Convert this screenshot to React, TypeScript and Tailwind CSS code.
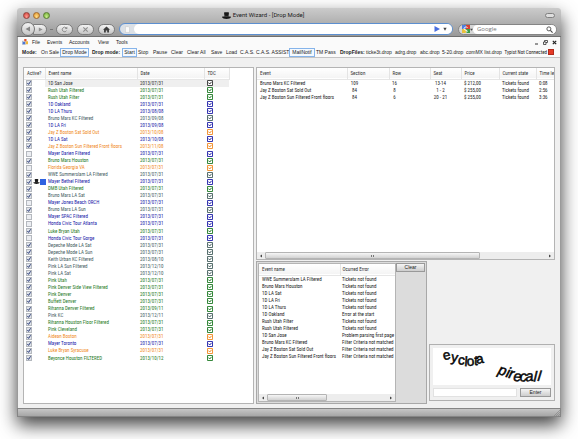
import React from "react";

type Tone = "black" | "green" | "blue" | "slate" | "orange";

const toneClass: Record<Tone, string> = {
  black: "text-[#333333]",
  green: "text-[#1f7a26]",
  blue: "text-[#2020a8]",
  slate: "text-[#45605f]",
  orange: "text-[#f08a24]",
};

type EventRow = { name: string; date: string; tone: Tone; off?: boolean; marked?: boolean };

const events: EventRow[] = [
  { name: "1D San Jose", date: "2013/07/31", tone: "black" },
  { name: "Rush Utah Filtered", date: "2013/07/31", tone: "green" },
  { name: "Rush Utah Filter", date: "2013/07/31", tone: "green" },
  { name: "1D Oakland", date: "2013/07/31", tone: "blue" },
  { name: "1D LA Thurs", date: "2013/08/08", tone: "blue" },
  { name: "Bruno Mars KC Filtered", date: "2013/09/08", tone: "slate" },
  { name: "1D LA Fri", date: "2013/09/08", tone: "blue" },
  { name: "Jay Z Boston Sat Sold Out", date: "2013/10/08", tone: "orange" },
  { name: "1D LA Sat", date: "2013/10/08", tone: "blue" },
  { name: "Jay Z Boston Sun Filtered Front floors", date: "2013/11/08", tone: "orange" },
  { name: "Mayer Darien Filtered", date: "2013/07/31", tone: "blue", off: true },
  { name: "Bruno Mars Houston", date: "2013/07/31", tone: "green" },
  { name: "Florida Georgia VA", date: "2013/07/31", tone: "orange", off: true },
  { name: "WWE Summerslam LA Filtered", date: "2013/07/31", tone: "slate" },
  { name: "Mayer Bethel Filtered", date: "2013/07/31", tone: "blue", marked: true },
  { name: "DMB Utah Filtered", date: "2013/07/31", tone: "green" },
  { name: "Bruno Mars LA Sat", date: "2013/07/31", tone: "slate" },
  { name: "Mayer Jones Beach ORCH", date: "2013/07/31", tone: "blue", off: true },
  { name: "Bruno Mars LA Sun", date: "2013/07/31", tone: "slate" },
  { name: "Mayer SPAC Filtered", date: "2013/07/31", tone: "blue", off: true },
  { name: "Honda Civic Tour Atlanta", date: "2013/07/31", tone: "blue", off: true },
  { name: "Luke Bryan Utah", date: "2013/07/31", tone: "green" },
  { name: "Honda Civic Tour Gorge", date: "2013/07/31", tone: "blue", off: true },
  { name: "Depeche Mode LA Sat", date: "2013/07/31", tone: "slate" },
  { name: "Depeche Mode LA Sun", date: "2013/07/31", tone: "slate" },
  { name: "Keith Urban KC Filtered", date: "2013/08/10", tone: "slate" },
  { name: "Pink LA Sun Filtered", date: "2013/12/10", tone: "slate" },
  { name: "Pink LA Sat", date: "2013/12/10", tone: "slate" },
  { name: "Pink Utah", date: "2013/07/31", tone: "green" },
  { name: "Pink Denver Side View Filtered", date: "2013/07/31", tone: "green" },
  { name: "Pink Denver", date: "2013/07/31", tone: "green" },
  { name: "Buffett Denver", date: "2013/07/31", tone: "green" },
  { name: "Rihanna Denver Filtered", date: "2013/09/11", tone: "green" },
  { name: "Pink KC", date: "2013/12/11", tone: "slate" },
  { name: "Rihanna Houston Floor Filtered", date: "2013/07/31", tone: "green" },
  { name: "Pink Cleveland", date: "2013/07/31", tone: "green" },
  { name: "Aidean Boston", date: "2013/07/31", tone: "orange" },
  { name: "Mayer Toronto", date: "2013/07/31", tone: "blue" },
  { name: "Luke Bryan Syracuse", date: "2013/07/31", tone: "orange" },
  { name: "Beyonce Houston FILTERED", date: "2013/10/12", tone: "green" },
];

const drops = [
  ["Bruno Mars KC Filtered", "109", "16", "13-14", "$ 212,00", "Tickets found", "0:08"],
  ["Jay Z Boston Sat Sold Out", "84", "8", "1 - 2", "$ 255,00", "Tickets found", "2:56"],
  ["Jay Z Boston Sun Filtered Front floors", "84", "6", "20 - 21", "$ 255,00", "Tickets found", "3:36"],
];

const dropCell = [
  "",
  "inline-block w-[9px] text-center",
  "inline-block w-[5px] text-center",
  "inline-block w-[15px] text-center",
  "",
  "",
  "",
];

const errors = [
  ["WWE Summerslam LA Filtered", "Tickets not found"],
  ["Bruno Mars Houston", "Tickets not found"],
  ["1D LA Sat", "Tickets not found"],
  ["1D LA Fri", "Tickets not found"],
  ["1D LA Thurs", "Tickets not found"],
  ["1D Oakland", "Error at the start"],
  ["Rush Utah Filter", "Tickets not found"],
  ["Rush Utah Filtered", "Tickets not found"],
  ["1D San Jose", "Problem parsing first page"],
  ["Bruno Mars KC Filtered", "Filter Criteria not matched"],
  ["Jay Z Boston Sat Sold Out", "Filter Criteria not matched"],
  ["Jay Z Boston Sun Filtered Front floors", "Filter Criteria not matched"],
];

const tools: { label: string; width: string; kind?: "bold" | "boxed" }[] = [
  { label: "Mode:", width: "w-[18px]", kind: "bold" },
  { label: "On Sale", width: "w-[20px]" },
  { label: "Drop Mode", width: "w-[29px]", kind: "boxed" },
  { label: "Drop mode:", width: "w-[33px]", kind: "bold" },
  { label: "Start", width: "w-[15px]", kind: "boxed" },
  { label: "Stop", width: "w-[15px]" },
  { label: "Pause", width: "w-[18px]" },
  { label: "Clear", width: "w-[16px]" },
  { label: "Clear All", width: "w-[24px]" },
  { label: "Save", width: "w-[15px]" },
  { label: "Load", width: "w-[14px]" },
  { label: "C.A.S.", width: "w-[16px]" },
  { label: "C.A.S. ASSIST", width: "w-[34px]" },
  { label: "MailNotif", width: "w-[26px]", kind: "boxed" },
  { label: "TM Pass", width: "w-[22px]" },
  { label: "DropFiles:", width: "w-[28px]", kind: "bold" },
  { label: "ticke3t.drop", width: "w-[29px]" },
  { label: "adrg.drop", width: "w-[25px]" },
  { label: "abc.drop", width: "w-[22px]" },
  { label: "5-20.drop", width: "w-[24px]" },
  { label: "comMX list.drop", width: "w-[36px]" },
];

const pill =
  "flex h-[11px] items-center justify-center rounded-full border border-[#7d7d7d] bg-linear-to-b from-[#f4f4f4] to-[#c4c4c4]";

function Hat({ className }: { className: string }) {
  return (
    <svg viewBox="0 0 18 14" className={className} aria-hidden="true">
      <path d="M4 1c3-1 7-1 10 0l-1 8c3 0 5 0 5 1 0 2-5 4-9 4s-9-2-9-4c0-1 2-1 5-1z" fill="#181818" />
      <path d="M5 8c3 1 5 1 8 0" stroke="#777" fill="none" />
    </svg>
  );
}

function Check({ label, off }: { label: string; off?: boolean }) {
  return (
    <span className="relative block size-[6px]">
      <input
        type="checkbox"
        aria-label={label}
        defaultChecked={!off}
        className="peer block size-[6px] appearance-none border border-[#b4b8be] bg-[#eceef2] checked:bg-[#dfe3ea]"
      />
      <svg
        viewBox="0 0 6 6"
        className="pointer-events-none absolute inset-0 hidden size-[6px] peer-checked:block"
        aria-hidden="true"
      >
        <path d="M1.4 3l1.2 1.4L4.6 1.3" fill="none" stroke="#2b3c78" strokeWidth="1" />
      </svg>
    </span>
  );
}

function TdcMark() {
  return (
    <svg viewBox="0 0 6 6" className="block size-[6px]" aria-hidden="true">
      <path d="M.5.5h5v5h-5z" fill="#fff" stroke="currentColor" strokeWidth=".9" />
      <path d="M1.500 2.600l1.200 1.400L4.600 1.800" fill="none" stroke="currentColor" strokeWidth="1" />
    </svg>
  );
}

function ScrollBar({ thumb }: { thumb: string }) {
  return (
    <div className="flex h-[7px] items-center bg-[#ededed] px-[2px]" aria-hidden="true">
      <svg viewBox="0 0 4 4" className="size-[4px]">
        <path d="M3 .5v3L1 2z" fill="#444" />
      </svg>
      <div className="ml-[2px] flex h-full flex-1">
        <div
          className={
            "flex h-full items-center justify-center gap-px rounded-[1px] border border-[#b4b4b4] bg-linear-to-b from-[#f6f6f6] to-[#d2d2d2] " +
            thumb
          }
        >
          <i className="h-[2px] w-px bg-[#777]" />
          <i className="h-[2px] w-px bg-[#777]" />
        </div>
      </div>
      <svg viewBox="0 0 4 4" className="size-[4px]">
        <path d="M1 .5v3L3 2z" fill="#444" />
      </svg>
    </div>
  );
}

const headRow = "h-[11px] border-b border-[#e6e6e6] bg-linear-to-b from-white to-[#f4f4f4] text-left text-[#333]";
const th = "border-r border-[#e4e4e4] p-0 pl-[3px] font-normal";
const listFont = "font-['Roboto_Condensed','Lato',sans-serif] text-[5px] leading-[7px]";

function TitleBar() {
  return (
    <header className="h-[29px] rounded-t-[3px] border-b border-[#6f6f6f] bg-linear-to-b from-[#cbcbcb] to-[#999999] px-[4px]">
      <div className="flex h-[14px] items-center px-[2px]">
        <div className="flex flex-1 gap-[3px]">
          <button aria-label="Close" className="size-[7px] rounded-full border border-[#93403b] bg-radial-[at_50%_75%] from-[#ff9c92] to-[#cf3a32]" />
          <button aria-label="Minimize" className="size-[7px] rounded-full border border-[#a26a2c] bg-radial-[at_50%_75%] from-[#ffe08a] to-[#e28f26]" />
          <button aria-label="Zoom" className="size-[7px] rounded-full border border-[#5a7d33] bg-radial-[at_50%_75%] from-[#c9f08b] to-[#6ba832]" />
        </div>
        <h1 className="mr-[52px] flex items-center gap-[2px] font-['Roboto','Open_Sans',sans-serif] text-[6px] leading-[8px] text-[#1c1c1c]">
          <Hat className="h-[7px] w-[9px]" />
          Event Wizard - [Drop Mode]
        </h1>
        <div className="flex flex-1 justify-end">
          <button aria-label="Toggle toolbar" className="h-[5px] w-[10px] rounded-full border border-[#808080] bg-[#dedede]" />
        </div>
      </div>
      <div className="flex h-[14px] items-center">
        <button aria-label="Back" className="z-10 flex size-[14px] items-center justify-center rounded-full border border-[#777] bg-linear-to-b from-[#f4f4f4] to-[#c4c4c4]">
          <svg viewBox="0 0 6 6" className="size-[6px]"><path d="M5 .5v5L.5 3z" fill="#858585" /></svg>
        </button>
        <button aria-label="Forward" className={pill + " -ml-[2px] w-[14px] rounded-l-none"}>
          <svg viewBox="0 0 6 6" className="size-[5px]"><path d="M1 .5v5L5.5 3z" fill="#909090" /></svg>
        </button>
        <i className="mx-[3px] h-px w-[3px] bg-[#777]" />
        <button aria-label="Reload" className={pill + " w-[17px]"}>
          <svg viewBox="0 0 8 8" className="size-[7px]"><path d="M6.3 5.3A2.6 2.6 0 1 1 5.8 2.100" fill="none" stroke="#8c8c8c" strokeWidth="1.100" /><path d="M7.200.5v3H4.200z" fill="#8c8c8c" /></svg>
        </button>
        <button aria-label="Stop loading" className={pill + " ml-[4px] w-[17px]"}>
          <svg viewBox="0 0 8 8" className="size-[7px]"><path d="M1.500 1.500l5 5M6.500 1.500l-5 5" stroke="#8c8c8c" strokeWidth="1.200" /></svg>
        </button>
        <button aria-label="Home" className={pill + " ml-[4px] w-[17px]"}>
          <svg viewBox="0 0 8 8" className="size-[7px]"><path d="M4 .5L8 4.300H6.800V7.500H4.800V5H3.200V7.500H1.200V4.300H0z" fill="#3c3c3c" /></svg>
        </button>
        <div className="ml-[4px] flex h-[12px] flex-1 items-center rounded-full border border-[#5c8fd0] bg-[#dbe0e6]">
          <svg viewBox="0 0 6 8" className="ml-[5px] h-[7px] w-[5px]"><path d="M.5.5h3.500l1.500 1.500v5.500h-5z" fill="#fafafa" stroke="#c0c0c0" strokeWidth=".6" /></svg>
          <div className="ml-[4px] flex h-full flex-1 items-center rounded-full bg-white pr-[5px]">
            <input aria-label="Address" className="h-[8px] min-w-0 flex-1 bg-transparent pl-[4px] text-[6px] outline-none" />
            <button aria-label="Go"><svg viewBox="0 0 6 6" className="size-[6px]"><path d="M.5 0v6L6 3z" fill="#4a6fe0" /></svg></button>
            <button aria-label="History" className="ml-[3px]"><svg viewBox="0 0 6 6" className="size-[4px]"><path d="M.5 1h5L3 5.500z" fill="#444" /></svg></button>
          </div>
        </div>
        <div className="ml-[5px] flex h-[11px] w-[99px] items-center rounded-full border border-[#858585] bg-[#d6d6d6]">
          <svg viewBox="0 0 8 8" className="ml-[3px] size-[8px]">
            <path d="M0 0h4v4H0z" fill="#4d7fe0" /><path d="M4 0h4v4H4z" fill="#d8402f" /><path d="M0 4h4v4H0z" fill="#eac13c" /><path d="M4 4h4v4H4z" fill="#3d9c45" />
            <path d="M5.500 2.500A2 1.600 0 1 0 4 5.200c1.500 0 1.800 2-.2 2" fill="none" stroke="#fff" strokeWidth="1" />
          </svg>
          <svg viewBox="0 0 4 4" className="size-[3px]"><path d="M0 1h4L2 3.500z" fill="#444" /></svg>
          <div className="flex h-full min-w-0 flex-1 items-center rounded-full bg-white pr-[3px] pl-[4px]">
            <input aria-label="Search" placeholder="Google" className="h-[9px] min-w-0 flex-1 bg-transparent font-['Open_Sans',sans-serif] text-[6px] leading-[9px] outline-none placeholder:text-[#777]" />
            <svg viewBox="0 0 8 8" className="size-[7px]"><circle cx="3.300" cy="3.300" r="2.300" fill="none" stroke="#444" /><path d="M5 5l2.500 2.500" stroke="#444" strokeWidth="1.200" /></svg>
          </div>
        </div>
      </div>
    </header>
  );
}

function Menus() {
  return (
    <div className="bg-[#fafafa] text-[#222]">
      <nav className="flex h-[10px] items-center pl-[4px]">
        <svg viewBox="0 0 8 8" className="size-[6px]">
          <path d="M0 3h5v4H0z" fill="#d8dcea" stroke="#6b7a9c" strokeWidth=".5" />
          <path d="M3 0h3v3H3z" fill="#e2512f" /><path d="M5 3h3v4H5z" fill="#f0b73a" /><path d="M1 4h3v3H1z" fill="#4a78d8" />
        </svg>
        <button className="ml-[4px] w-[15px] text-left">File</button>
        <button className="w-[22px] text-left">Events</button>
        <button className="w-[29px] text-left">Accounts</button>
        <button className="w-[18px] text-left">View</button>
        <button className="text-left">Tools</button>
        <div className="ml-auto flex items-center gap-[4px] pr-[3px]">
          <button aria-label="Minimize child"><svg viewBox="0 0 5 5" className="size-[5px]"><path d="M1 4h3" stroke="#333" /></svg></button>
          <button aria-label="Restore child"><svg viewBox="0 0 5 5" className="size-[5px]"><path d="M1.500 2V.5h3v2H3M.5 2h2.500v2.500H.5z" fill="none" stroke="#333" strokeWidth=".8" /></svg></button>
          <button aria-label="Close child"><svg viewBox="0 0 5 5" className="size-[5px]"><path d="M.8.8l3.400 3.400M4.200.8L.8 4.200" stroke="#222" strokeWidth="1.200" /></svg></button>
        </div>
      </nav>
      <div role="toolbar" className="flex h-[11px] items-center border-b border-[#c4c4c4] pl-[4px] whitespace-nowrap">
        {tools.map((t) =>
          t.kind === "bold" ? (
            <span key={t.label} className={t.width + " shrink-0 font-bold " + (t.label === "Mode:" ? "" : "pl-[3px]")}>
              {t.label}
            </span>
          ) : (
            <button
              key={t.label}
              className={
                t.width +
                " h-[9px] shrink-0 " +
                (t.kind === "boxed" ? "border border-[#86b4ea] bg-[#f4f9ff] text-center" : "pl-px text-left")
              }
            >
              {t.label}
            </button>
          ),
        )}
        <span className="ml-auto flex items-center gap-px pr-[6px] font-['Roboto_Condensed','Lato',sans-serif]">
          Typist Not Connected
          <i className="size-[6px] border border-[#b02a1c] bg-[#e53a26]" />
        </span>
      </div>
    </div>
  );
}

function EventList() {
  return (
    <section className="w-[231px] shrink-0 border border-[#b4b4b4] bg-white pb-px">
      <table className={"h-[294px] w-[205px] table-fixed border-collapse " + listFont}>
        <thead>
          <tr className={headRow}>
            <th className={th + " w-[21px]"}>Active?</th>
            <th className={th + " w-[92px]"}>Event name</th>
            <th className={th + " w-[67px]"}>Date</th>
            <th className={th + " w-[25px]"}>TDC</th>
          </tr>
        </thead>
        <tbody>
          {events.map((e, i) => (
            <tr key={i} className={toneClass[e.tone]}>
              <td className="p-0 pl-[2px]">
                <div className="flex items-center">
                  <Check label={e.name} off={e.off} />
                  {e.marked && (
                    <span className="-mr-[6px] ml-px flex items-center">
                      <Hat className="h-[5px] w-[7px]" />
                      <i className="size-[6px] bg-[#2f62e0]" />
                    </span>
                  )}
                </div>
              </td>
              <td className={"p-0 pl-[3px] whitespace-nowrap " + (i === 0 ? "bg-[#efefef]" : "")}>{e.name}</td>
              <td className={"p-0 pl-[3px] " + (i === 0 ? "bg-[#efefef]" : "")}>{e.date}</td>
              <td className={"p-0 pl-[3px] " + (i === 0 ? "bg-[#efefef]" : "")}>
                <TdcMark />
              </td>
            </tr>
          ))}
        </tbody>
      </table>
    </section>
  );
}

function DropTable() {
  return (
    <section className="flex h-[193px] flex-col border border-[#b4b4b4] bg-white">
      <div className="flex-1 overflow-hidden">
        <table className={"w-full table-fixed border-collapse whitespace-nowrap " + listFont}>
          <thead>
            <tr className={headRow}>
              <th className={th + " w-[90px]"}>Event</th>
              <th className={th + " w-[42px]"}>Section</th>
              <th className={th + " w-[41px]"}>Row</th>
              <th className={th + " w-[31px]"}>Seat</th>
              <th className={th + " w-[38px]"}>Price</th>
              <th className={th + " w-[37px]"}>Current state</th>
              <th className="overflow-hidden p-0 pl-[3px] font-normal">Time left</th>
            </tr>
          </thead>
          <tbody className="text-[#222]">
            {drops.map((r, i) => (
              <tr key={i}>
                {r.map((c, j) => (
                  <td key={j} className="h-[7px] p-0 pl-[3px]">
                    <span className={dropCell[j] + " align-top"}>{c}</span>
                  </td>
                ))}
              </tr>
            ))}
          </tbody>
        </table>
      </div>
      <ScrollBar thumb="w-[76%]" />
    </section>
  );
}

const winButton =
  "border border-[#999] bg-linear-to-b from-[#f5f5f5] to-[#cdcdcd] text-center text-[#222] leading-[7px]";

function ErrorPanel() {
  return (
    <section className="flex w-[171px] shrink-0 border border-[#a8a8a8] bg-[#dcdcdc] p-px">
      <div className="flex w-[138px] flex-col border border-[#b4b4b4] bg-white">
        <div className="flex-1 overflow-hidden">
          <table className={"w-full table-fixed border-collapse whitespace-nowrap " + listFont}>
            <thead>
              <tr className={headRow}>
                <th className={th + " w-[81px]"}>Event name</th>
                <th className="p-0 pl-[2px] font-normal">Ocurred Error</th>
              </tr>
            </thead>
            <tbody className="text-[#222]">
              {errors.map((r, i) => (
                <tr key={i}>
                  <td className="p-0 pl-[3px]">{r[0]}</td>
                  <td className="overflow-hidden p-0 pl-[2px]">{r[1]}</td>
                </tr>
              ))}
            </tbody>
          </table>
        </div>
        <ScrollBar thumb="w-[60px]" />
      </div>
      <button className={winButton + " h-[9px] flex-1"}>Clear</button>
    </section>
  );
}

const firstWord: [string, number, number, number][] = [
  ["e", 11, 12, -12], ["y", 18, 13, 10], ["c", 25, 16, 8], ["l", 32, 18, 4], ["o", 35, 18, -4], ["t", 42, 17, 2], ["a", 45, 16, -10],
];
const secondWord: [string, number, number, number][] = [
  ["p", 66, 26, 18], ["i", 74, 29, 16], ["r", 77, 30, 14], ["e", 82, 33, 6], ["c", 89, 34, -2], ["a", 95, 34, -6], ["l", 103, 34, 2], ["l", 107, 33, 6],
];

function CaptchaPanel() {
  return (
    <form className="mb-[3px] flex flex-1 flex-col self-end border border-[#b0b0b0] p-[3px]" onSubmit={(e) => e.preventDefault()}>
      <svg viewBox="0 0 121 37" className="h-[37px] w-full bg-white" role="img" aria-label="eyclota pirecall">
        <g fontFamily="Liberation Sans" fontSize="14" fill="#050505" stroke="#050505" strokeWidth=".5">
          {firstWord.map(([c, x, y, r], i) => (
            <text key={i} x={x} y={y} transform={`rotate(${r} ${x} ${y})`}>{c}</text>
          ))}
        </g>
        <g fontFamily="Liberation Sans" fontStyle="italic" fontSize="15" fill="#050505" stroke="#050505" strokeWidth=".5">
          {secondWord.map(([c, x, y, r], i) => (
            <text key={i} x={x} y={y} transform={`rotate(${r} ${x} ${y})`}>{c}</text>
          ))}
        </g>
      </svg>
      <div className="mt-[3px] flex h-[9px] gap-[3px]">
        <input aria-label="Captcha text" className="min-w-0 flex-1 border border-[#e2e2e2] bg-white px-[2px] text-[5px] outline-none" />
        <button className={winButton + " w-[31px]"}>Enter</button>
      </div>
    </form>
  );
}

export default function App() {
  return (
    <div className="bg-white px-[17px] pt-[8px] pb-[22px] font-['Liberation_Sans',Arial,sans-serif] text-[5px] leading-[7px]">
      <div className="rounded-t-[3px] shadow-[0_8px_18px_rgba(0,0,0,0.75)]">
        <TitleBar />
        <div className="border-x border-[#9a9a9a] bg-[#f0f0f0]">
          <Menus />
          <main className="flex gap-[2px] px-[5px] pt-[9px] pb-[4px]">
            <EventList />
            <div className="flex min-w-0 flex-1 flex-col gap-px">
              <DropTable />
              <div className="flex h-[143px] gap-[2px]">
                <ErrorPanel />
                <CaptchaPanel />
              </div>
            </div>
          </main>
        </div>
        <footer className="flex h-[9px] items-end justify-end border border-[#858585] bg-linear-to-b from-[#c6c6c6] to-[#a6a6a6]">
          <svg viewBox="0 0 6 6" className="size-[6px]"><path d="M0 6l6-6M2 6l4-4M4 6l2-2" stroke="#808080" strokeWidth=".6" /></svg>
        </footer>
      </div>
    </div>
  );
}
